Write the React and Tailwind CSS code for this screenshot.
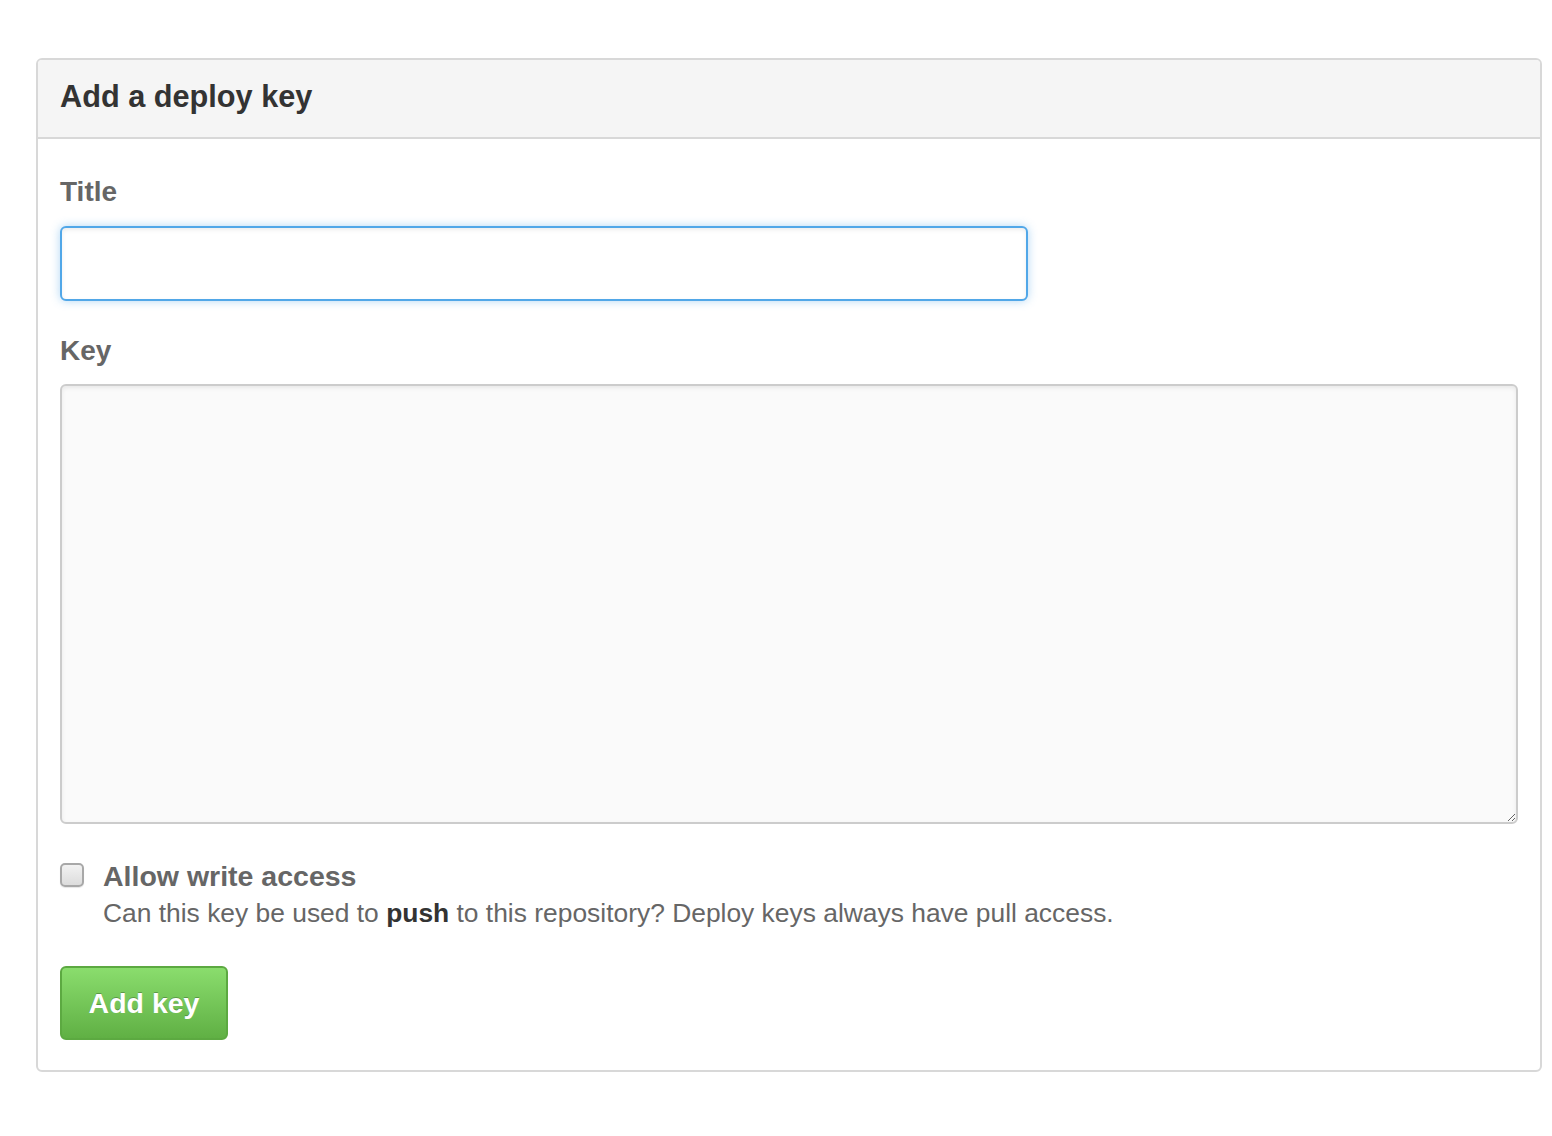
export default function App() {
  return (
    <div className="min-h-[1136px] w-[1552px] bg-white pt-[58px] pl-[36px]" style={{ fontFamily: '"Liberation Sans", Arial, sans-serif' }}>
      <div className="w-[1506px] rounded-[6px] border-2 border-[#d8d8d8]">
        <div className="flex h-[79px] items-center rounded-t-[4px] border-b-2 border-[#d8d8d8] bg-[#f5f5f5] px-[22px]">
          <h3 className="-mt-[3px] text-[30.7px] font-bold leading-none text-[#333]">Add a deploy key</h3>
        </div>
        <form className="px-[22px] pt-[38px] pb-[30px]">
          <label className="block text-[28px] font-bold leading-[30px] text-[#666]">Title</label>
          <input
            type="text"
            className="mt-[19px] block h-[75px] w-[968px] rounded-[6px] border-2 border-[#51a7e8] bg-white px-4 text-[26px] outline-none shadow-[inset_0_2px_4px_rgba(0,0,0,0.075),0_0_10px_rgba(81,167,232,0.45)]"
          />
          <label className="mt-[35px] block text-[28px] font-bold leading-[30px] text-[#666]">Key</label>
          <textarea className="mt-[18px] block h-[440px] w-[1458px] rounded-[6px] border-2 border-[#ccc] bg-[#fafafa] px-4 py-3 text-[26px] outline-none shadow-[inset_0_2px_4px_rgba(0,0,0,0.075)]" />
          <div className="mt-[38px] flex items-start gap-[19px]">
            <div className="mt-[1px] h-[24px] w-[24px] shrink-0 rounded-[5px] border-2 border-[#a8a8a8] bg-gradient-to-b from-[#f2f2f2] to-[#dcdcdc] shadow-[0_1px_1px_rgba(0,0,0,0.1)]" />
            <div>
              <div className="text-[28.5px] font-bold leading-[28px] text-[#666]">Allow write access</div>
              <p className="mt-[9px] text-[26.4px] leading-[28px] text-[#666]">
                Can this key be used to <strong className="text-[#333]">push</strong> to this repository? Deploy keys always have pull access.
              </p>
            </div>
          </div>
          <button
            type="button"
            className="mt-[39px] flex h-[74px] w-[168px] items-center justify-center rounded-[6px] border-2 border-[#5ca941] bg-gradient-to-b from-[#8add6d] to-[#60b044] text-[28.5px] font-bold text-white [text-shadow:0_-1px_0_rgba(0,0,0,0.25)]"
          >
            Add key
          </button>
        </form>
      </div>
    </div>
  );
}
